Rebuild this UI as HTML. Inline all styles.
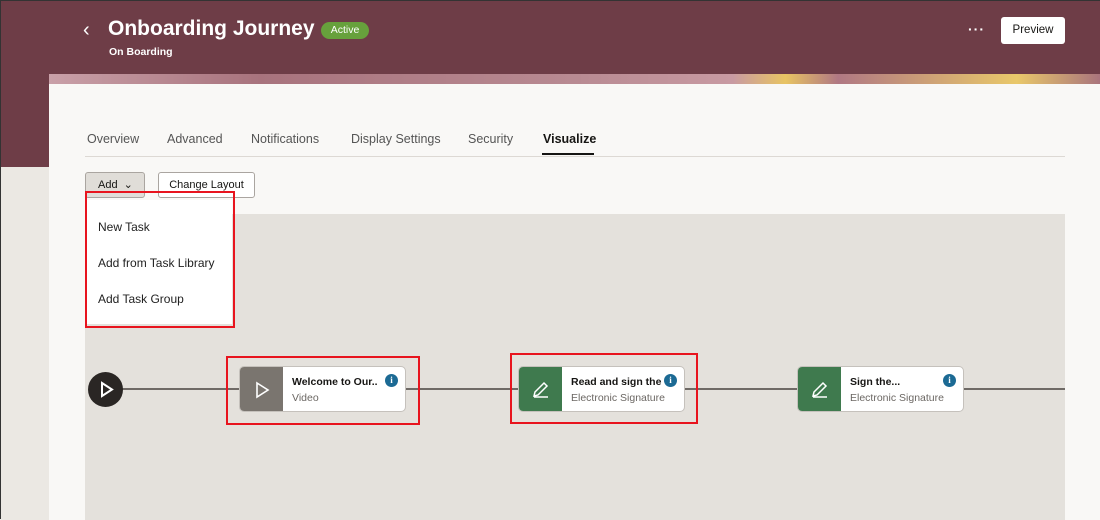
<!DOCTYPE html><html><head><style>
*{box-sizing:border-box;margin:0;padding:0}
body{width:1100px;height:519px;overflow:hidden;font-family:"Liberation Sans",sans-serif;background:#f1efec;position:relative;border:1px solid #333}
.hdr{position:absolute;left:0;top:0;width:1100px;height:166px;background:#6e3d47}
.lside{position:absolute;left:0;top:166px;width:48px;height:353px;background:#ebe8e3}
.strip{position:absolute;left:48px;top:73px;width:1052px;height:10px;background:linear-gradient(90deg,#c9a0a8 0,#a8737d 20%,#b88a92 50%,#c89aa2 65%,#e8c463 70%,#b07883 75%,#e9c86a 92%,#a8737d 100%)}
.panel{position:absolute;left:48px;top:83px;width:1052px;height:436px;background:#f9f8f6}
.abs{position:absolute}
.tab{position:absolute;top:131px;font-size:12.5px;color:#555}
.canvas{position:absolute;left:84px;top:213px;width:980px;height:306px;background:#e4e1dc}
.line{position:absolute;top:387px;height:1.5px;background:#6f6a66}
.card{position:absolute;top:365px;width:167px;height:46px;background:#fff;border:1px solid #c5c1bc;border-radius:5px;overflow:hidden}
.card .ic{position:absolute;left:0;top:0;width:43px;height:46px}
.card b{position:absolute;left:52px;top:9px;font-size:10.5px;color:#161513;width:92px;overflow:hidden;white-space:nowrap}
.card span{position:absolute;left:52px;top:25px;font-size:10.5px;color:#6b6763}
.info{position:absolute;right:7px;top:7px;width:13px;height:13px;border-radius:50%;background:#1c6a94;color:#fff;font:bold 9px "Liberation Serif",serif;text-align:center;line-height:13px}
.red{position:absolute;border:2px solid #e8141e}
.mi{position:absolute;left:97px;font-size:12px;color:#222}
</style></head><body>
<div class="hdr"></div><div class="lside"></div><div class="strip"></div><div class="panel"></div>
<div class="abs" style="left:82px;top:18px;color:#fff;font-size:20px">‹</div>
<div class="abs" style="left:107px;top:16px;color:#fff;font-size:21px;font-weight:bold">Onboarding Journey</div>
<div class="abs" style="left:320px;top:21px;width:48px;height:17px;border-radius:9px;background:#67a13c;color:#fff;font-size:10.5px;text-align:center;line-height:17px">Active</div>
<div class="abs" style="left:108px;top:45px;color:#fff;font-size:10.5px;font-weight:bold">On Boarding</div>
<div class="abs" style="left:967px;top:20px;color:#fff;font-size:14px;font-weight:bold;letter-spacing:1px">···</div>
<div class="abs" style="left:1000px;top:16px;width:64px;height:27px;background:#fff;border-radius:3px;font-size:11.5px;color:#161513;text-align:center;line-height:27px">Preview</div>
<div class="tab" style="left:86px">Overview</div>
<div class="tab" style="left:166px">Advanced</div>
<div class="tab" style="left:250px">Notifications</div>
<div class="tab" style="left:350px">Display Settings</div>
<div class="tab" style="left:467px">Security</div>
<div class="tab" style="left:542px;color:#161513;font-weight:bold">Visualize</div>
<div class="abs" style="left:541px;top:152px;width:52px;height:2px;background:#161513"></div>
<div class="abs" style="left:84px;top:155px;width:980px;height:1px;background:#ddd9d4"></div>
<div class="abs" style="left:84px;top:171px;width:60px;height:26px;background:#e0ddd8;border:1px solid #aaa5a0;border-radius:3px;font-size:11px;line-height:24px;padding-left:12px;color:#161513">Add&nbsp;&nbsp;⌄</div>
<div class="abs" style="left:157px;top:171px;width:97px;height:26px;background:#fff;border:1px solid #aaa5a0;border-radius:3px;font-size:11px;line-height:24px;text-align:center;color:#161513">Change Layout</div>
<div class="canvas"></div>
<div class="abs" style="left:86px;top:199px;width:145px;height:124px;background:#fff"></div>
<div class="red" style="left:84px;top:190px;width:150px;height:137px"></div>
<div class="mi" style="top:219px">New Task</div>
<div class="mi" style="top:255px">Add from Task Library</div>
<div class="mi" style="top:291px">Add Task Group</div>
<div class="line" style="left:110px;width:954px"></div>
<div class="abs" style="left:87px;top:371px;width:35px;height:35px;border-radius:50%;background:#2a2624"><svg width="35" height="35"><path d="M14 11 L24 17.5 L14 24 Z" fill="none" stroke="#fff" stroke-width="2"/></svg></div>
<div class="card" style="left:238px"><div class="ic" style="background:#7a756f"><svg width="43" height="46"><path d="M17 16 L28 23 L17 30 Z" fill="none" stroke="#fff" stroke-width="1.6"/></svg></div><b>Welcome to Our..</b><span>Video</span><div class="info">i</div></div>
<div class="card" style="left:517px"><div class="ic" style="background:#3f7a4e"><svg width="43" height="46"><path d="M15 29 L16 25 L25 16 L28 19 L19 28 Z M15 30 H29" fill="none" stroke="#fff" stroke-width="1.5"/></svg></div><b>Read and sign the</b><span>Electronic Signature</span><div class="info">i</div></div>
<div class="card" style="left:796px"><div class="ic" style="background:#3f7a4e"><svg width="43" height="46"><path d="M15 29 L16 25 L25 16 L28 19 L19 28 Z M15 30 H29" fill="none" stroke="#fff" stroke-width="1.5"/></svg></div><b>Sign the...</b><span>Electronic Signature</span><div class="info">i</div></div>
<div class="red" style="left:225px;top:355px;width:194px;height:69px"></div>
<div class="red" style="left:509px;top:352px;width:188px;height:71px"></div>
</body></html>
